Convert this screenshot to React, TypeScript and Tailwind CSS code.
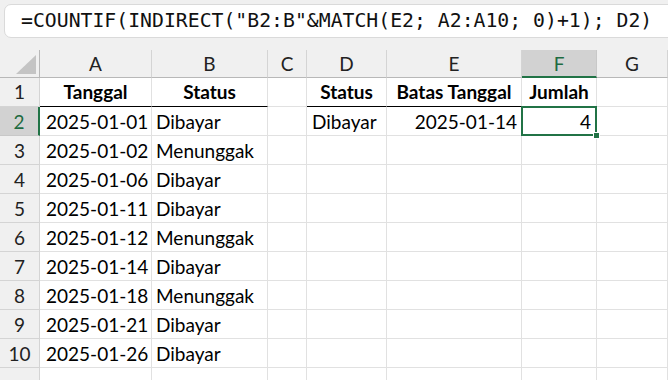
import React from "react";

const cols = ["A", "B", "C", "D", "E", "F", "G"];

const data: [string, string][] = [
  ["2025-01-01", "Dibayar"],
  ["2025-01-02", "Menunggak"],
  ["2025-01-06", "Dibayar"],
  ["2025-01-11", "Dibayar"],
  ["2025-01-12", "Menunggak"],
  ["2025-01-14", "Dibayar"],
  ["2025-01-18", "Menunggak"],
  ["2025-01-21", "Dibayar"],
  ["2025-01-26", "Dibayar"],
];

const FORMULA = '=COUNTIF(INDIRECT("B2:B"&MATCH(E2; A2:A10; 0)+1); D2)';

const cell = "flex items-center border-r border-b border-[#e1e1e1] overflow-hidden whitespace-nowrap pt-[3px]";
const rowHead = "flex items-center justify-center border-r border-b border-[#d4d4d4] bg-[#f0f0f0] text-[#222] pt-[3px]";

const Row = ({ n, children }: { n?: number; children: React.ReactNode }) => (
  <>
    <div className={rowHead}>{n}</div>
    {children}
  </>
);

export default function App() {
  return (
    <div className="w-[668px] h-[380px] overflow-hidden bg-[#f0f0f0] font-['Lato',sans-serif] text-[19px] text-black">
      <div className="h-[50px] pt-[4px] pl-[4px]">
        <div className="h-[34px] w-[700px] rounded-[7px] border border-[#dadada] bg-white flex items-center pl-[16px] font-['DejaVu_Sans_Mono',monospace] text-[19.8px] text-[#111] whitespace-pre">
          {FORMULA}
        </div>
      </div>

      <div className="grid grid-cols-[40px_112px_116px_39px_80px_135px_75px_1fr] grid-rows-[28px_repeat(11,29px)] bg-white">
        {/* corner */}
        <div className="relative border-r border-b border-[#b8b8b8] bg-[#f0f0f0]">
          <div className="absolute left-[16px] top-[5px] w-0 h-0 border-l-[20px] border-l-transparent border-b-[19px] border-b-[#c4c4c4]" />
        </div>
        {cols.map((c) =>
          c === "F" ? (
            <div
              key={c}
              className="flex items-center justify-center pt-[2px] bg-[#d2d2d2] border-r border-[#c8c8c8] border-b-2 border-b-[#217346] text-[#1e6b41]"
            >
              {c}
            </div>
          ) : (
            <div
              key={c}
              className="flex items-center justify-center pt-[2px] bg-[#f0f0f0] border-r border-r-[#d4d4d4] border-b border-b-[#b8b8b8] text-[#222]"
            >
              {c}
            </div>
          )
        )}

        {/* row 1 */}
        <div className="flex items-center justify-center border-r border-b border-[#d4d4d4] bg-[#f0f0f0] text-[#222]">1</div>
        <div className="flex items-center justify-center font-bold border-r border-r-[#e1e1e1] border-b border-b-black">Tanggal</div>
        <div className="flex items-center justify-center font-bold border-r border-r-[#e1e1e1] border-b border-b-black">Status</div>
        <div className="border-r border-b border-[#e1e1e1]" />
        <div className="flex items-center justify-center font-bold border-r border-r-[#e1e1e1] border-b border-b-black">Status</div>
        <div className="flex items-center justify-center font-bold border-r border-r-[#e1e1e1] border-b border-b-black whitespace-nowrap">Batas Tanggal</div>
        <div className="flex items-center justify-center font-bold border-r border-r-[#e1e1e1] border-b border-b-black">Jumlah</div>
        <div className="border-r border-b border-[#e1e1e1]" />

        {/* row 2 */}
        <div className="flex items-center justify-center pt-[3px] bg-[#d2d2d2] border-r-2 border-r-[#217346] border-b border-b-[#c8c8c8] text-[#1e6b41]">2</div>
        <div className={`${cell} pl-[6px]`}>{data[0][0]}</div>
        <div className={`${cell} pl-[4px]`}>{data[0][1]}</div>
        <div className={cell} />
        <div className={`${cell} pl-[5px]`}>Dibayar</div>
        <div className={`${cell} justify-end pr-[4px]`}>2025-01-14</div>
        <div className={`${cell} relative justify-end pr-[5px] overflow-visible`}>
          4
          <div className="absolute -left-[1px] -top-[1px] -right-[1px] -bottom-[1px] border-2 border-[#217346]" />
          <div className="absolute -right-[4px] -bottom-[4px] w-[7px] h-[7px] bg-[#217346] border border-white" />
        </div>
        <div className={cell} />

        {data.slice(1).map(([d, s], i) => (
          <Row key={d} n={i + 3}>
            <div className={`${cell} pl-[6px]`}>{d}</div>
            <div className={`${cell} pl-[4px]`}>{s}</div>
            <div className={cell} />
            <div className={cell} />
            <div className={cell} />
            <div className={cell} />
            <div className={cell} />
          </Row>
        ))}

        {/* row 11, cut off by the window */}
        <Row>
          <div className={cell} />
          <div className={cell} />
          <div className={cell} />
          <div className={cell} />
          <div className={cell} />
          <div className={cell} />
          <div className={cell} />
        </Row>
      </div>
    </div>
  );
}
